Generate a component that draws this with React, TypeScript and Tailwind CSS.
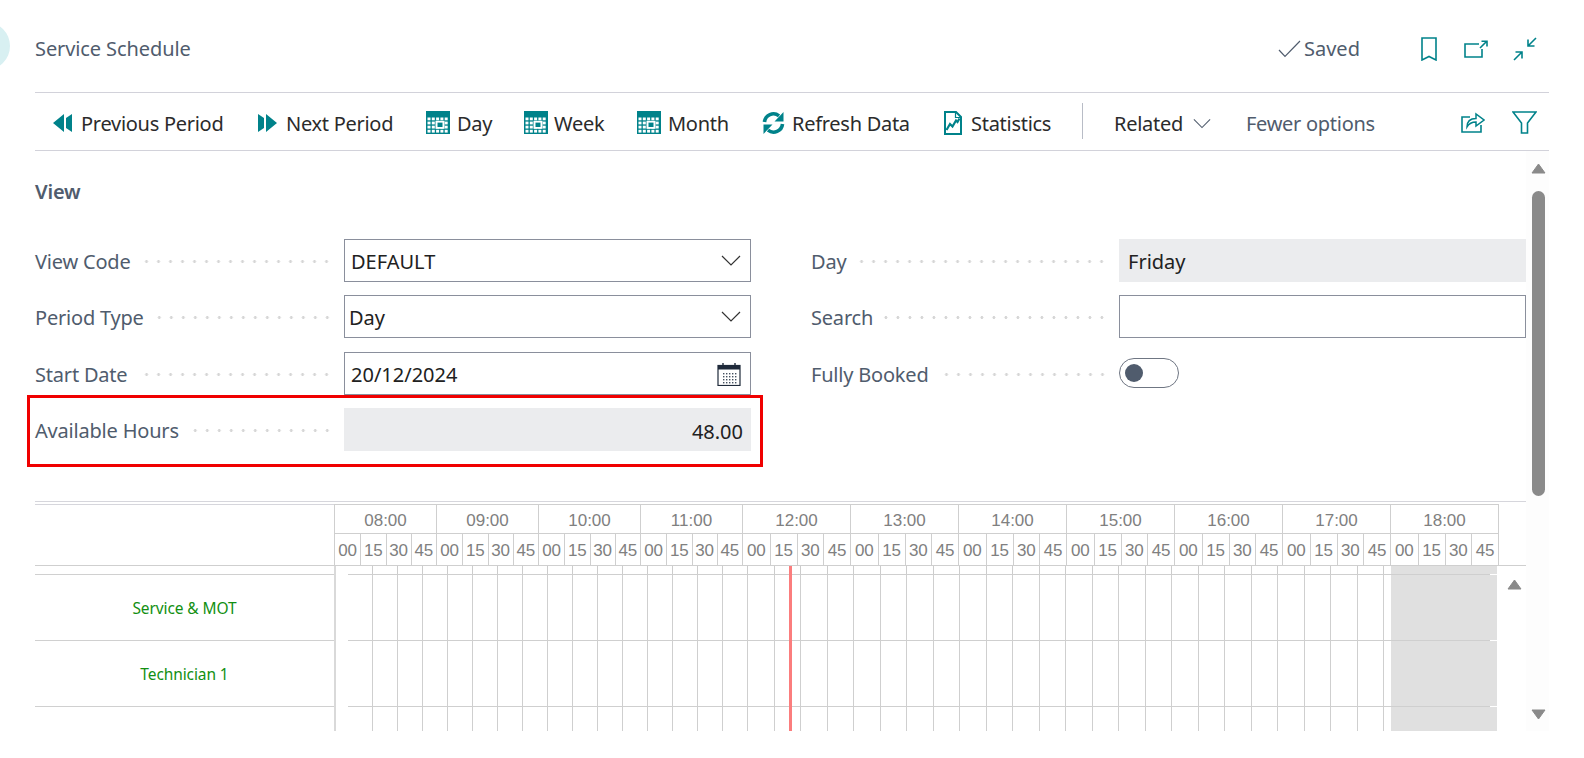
import React from "react";

const TEAL = "#00828a";

function PrevIcon() {
  return (
    <svg width="20" height="18" viewBox="0 0 20 18" className="shrink-0">
      <path d="M0 9 L11 0 V18 Z M13 4 L19 0 V18 L13 14 Z" fill={TEAL} />
    </svg>
  );
}
function NextIcon() {
  return (
    <svg width="20" height="18" viewBox="0 0 20 18" className="shrink-0">
      <path d="M20 9 L9 0 V18 Z M7 4 L1 0 V18 L7 14 Z" fill={TEAL} />
    </svg>
  );
}
function GridIcon() {
  const xs = [1.5, 5.8, 10.1, 14.4, 18.7];
  const ys = [6.5, 10.6, 14.7, 18.8];
  return (
    <svg width="24" height="23" viewBox="0 0 24 23" className="shrink-0">
      <rect width="24" height="23" fill={TEAL} />
      {ys.map((y) =>
        xs.map((x) => <rect key={`${x}-${y}`} x={x} y={y} width="3" height="2.8" fill="#fff" />)
      )}
      <rect x="9.5" y="9.8" width="9" height="8" fill="#fff" />
      <rect x="11.5" y="11.6" width="5" height="4.4" fill={TEAL} />
    </svg>
  );
}
function RefreshIcon() {
  return (
    <svg width="23" height="24" viewBox="0 0 23 24" fill="none" className="shrink-0">
      <path d="M2.5 11 A9 9 0 0 1 17 4.8" stroke={TEAL} strokeWidth="3.6" />
      <path d="M21.5 1 V10.5 H12.5 Z" fill={TEAL} />
      <path d="M20.5 13 A9 9 0 0 1 6 19.2" stroke={TEAL} strokeWidth="3.6" />
      <path d="M1.5 23 V13.5 H10.5 Z" fill={TEAL} />
    </svg>
  );
}
function StatsIcon() {
  return (
    <svg width="18" height="24" viewBox="0 0 18 24" fill="none" className="shrink-0">
      <path d="M1 1 H12 L17 6 V23 H1 Z" stroke={TEAL} strokeWidth="2" />
      <path d="M11.5 1 V6.5 H17" stroke={TEAL} strokeWidth="1.2" />
      <path d="M2.5 19 L6 13 L8.5 15.5 L12 9.5 L13.5 11 L15.5 7.5" stroke={TEAL} strokeWidth="2.2" />
    </svg>
  );
}
function Chevron({ color = "#212121", w = 20 }: { color?: string; w?: number }) {
  return (
    <svg width={w} height="11" viewBox="0 0 20 11" fill="none" className="shrink-0">
      <path d="M1 1 L10 10 L19 1" stroke={color} strokeWidth="1.2" />
    </svg>
  );
}
function CalendarIcon() {
  const xs = [7, 10, 13, 16, 19];
  const ys = [11, 14, 17, 20];
  return (
    <svg width="24" height="24" viewBox="0 0 24 24" fill="none" className="shrink-0">
      <rect x="1" y="3.5" width="22" height="20" stroke="#1f2a3a" strokeWidth="1.2" />
      <rect x="1" y="3.5" width="22" height="4" fill="#1f2a3a" />
      <path d="M6 1 V5 M18 1 V5" stroke="#1f2a3a" strokeWidth="1.4" />
      {ys.map((y) => xs.map((x) => <rect key={`${x}-${y}`} x={x - 1} y={y} width="1.4" height="1.4" fill="#44505f" />))}
    </svg>
  );
}

function ToolButton({ icon, label, cls }: { icon: React.ReactNode; label: string; cls: string }) {
  return (
    <div className={`flex items-center ${cls}`}>
      {icon}
      <span className="whitespace-nowrap pt-[2px]">{label}</span>
    </div>
  );
}

function Dots() {
  return (
    <div className="flex-1 h-[3px] mt-[2px] ml-[10px] mr-[11px] bg-[radial-gradient(circle,#d6d6d6_1.4px,transparent_1.6px)] bg-[length:12px_3px] bg-[position:right_center] bg-repeat-x" />
  );
}

function Row({ label, cls, children }: { label: string; cls?: string; children: React.ReactNode }) {
  return (
    <div className={`flex items-center h-[43px] ${cls ?? ""}`}>
      <span className="text-[20px] tracking-[-0.2px] text-[#505c6d] whitespace-nowrap pt-[3px]">{label}</span>
      <Dots />
      {children}
    </div>
  );
}

const HOURS: { label: string; wide: boolean }[] = [
  { label: "08:00", wide: false },
  { label: "09:00", wide: false },
  { label: "10:00", wide: false },
  { label: "11:00", wide: false },
  { label: "12:00", wide: true },
  { label: "13:00", wide: true },
  { label: "14:00", wide: true },
  { label: "15:00", wide: true },
  { label: "16:00", wide: true },
  { label: "17:00", wide: true },
  { label: "18:00", wide: true },
];
const COL_NARROW = Array.from({ length: 16 });
const COL_WIDE = Array.from({ length: 24 });

function TimelineRow({ h, line }: { h: string; line: boolean }) {
  const t = line ? "border-t border-[#cfcfcf]" : "";
  return (
    <div className={`flex ${h}`}>
      <div className="w-[12px] shrink-0" />
      {COL_NARROW.map((_, i) => (
        <div key={i} className={`w-[25px] shrink-0 border-r border-[#cccccc] ${t}`} />
      ))}
      {COL_WIDE.map((_, i) => (
        <div key={i} className={`w-[26.5px] shrink-0 border-r border-[#cccccc] ${t}`} />
      ))}
      <div className={`w-[6.5px] shrink-0 ${t}`} />
      <div className="w-[106px] shrink-0 bg-[#e0e0e0] flex flex-col">
        {line && (
          <div className="flex h-px shrink-0">
            <div className="w-[99px] bg-[#cfcfcf]" />
            <div className="flex-1 bg-white" />
          </div>
        )}
      </div>
    </div>
  );
}

function Triangle({ down, cls }: { down?: boolean; cls: string }) {
  return (
    <svg width="15" height="11" viewBox="0 0 15 11" className={cls}>
      <path d={down ? "M1 1 H14 L7.5 10 Z" : "M1 10 H14 L7.5 1 Z"} fill="#8a8a8a" stroke="#8a8a8a" strokeLinejoin="round" />
    </svg>
  );
}

export default function App() {
  return (
    <div className="relative w-[1584px] h-[758px] overflow-hidden bg-white font-['Noto_Sans','Open_Sans',sans-serif]">
      <div className="absolute left-[-38px] top-[22px] w-[48px] h-[48px] rounded-full bg-[#d8f0f2]" />

      <div className="ml-[35px] w-[1514px]">
        {/* title bar */}
        <header className="h-[93px] border-b border-[#d2d2da] flex items-center pt-[6px]">
          <h1 className="text-[20px] tracking-[-0.1px] text-[#505c6d] font-normal">Service Schedule</h1>
          <div className="ml-auto flex items-center">
            <svg width="23" height="18" viewBox="0 0 23 18" fill="none" className="mr-[3px]">
              <path d="M1 10 L7 16.5 L22 1" stroke="#505c6d" strokeWidth="1.2" />
            </svg>
            <span className="text-[20px] text-[#505c6d] w-[117px]">Saved</span>
            <svg width="16" height="24" viewBox="0 0 16 24" fill="none" className="mr-[27px]">
              <path d="M1 1 H15 V23 L8 19.5 L1 23 Z" stroke={TEAL} strokeWidth="1.6" />
            </svg>
            <svg width="24" height="18" viewBox="0 0 24 18" fill="none" className="mr-[25px]">
              <path d="M15 4 H1 V17 H18 V9" stroke={TEAL} strokeWidth="1.6" />
              <path d="M16 8 L22 2 M17.5 1.2 H23 V6.5" stroke={TEAL} strokeWidth="1.6" />
            </svg>
            <svg width="24" height="24" viewBox="0 0 24 24" fill="none" className="mr-[12px]">
              <path d="M23 1 L15 9 M15 2.5 V9 H21.5" stroke={TEAL} strokeWidth="1.6" />
              <path d="M1 23 L9 15 M2.5 15 H9 V21.5" stroke={TEAL} strokeWidth="1.6" />
            </svg>
          </div>
        </header>

        {/* action bar */}
        <nav className="h-[58px] border-b border-[#d2d2da] flex items-center text-[20px] tracking-[-0.28px] text-[#2b2b2b] pl-[18px] pt-[2px]">
          <ToolButton icon={<PrevIcon />} label="Previous Period" cls="gap-[8px] w-[204px]" />
          <ToolButton icon={<NextIcon />} label="Next Period" cls="gap-[9px] w-[169px]" />
          <ToolButton icon={<GridIcon />} label="Day" cls="gap-[7px] w-[98px]" />
          <ToolButton icon={<GridIcon />} label="Week" cls="gap-[6px] w-[113px]" />
          <ToolButton icon={<GridIcon />} label="Month" cls="gap-[7px] w-[125px]" />
          <ToolButton icon={<RefreshIcon />} label="Refresh Data" cls="gap-[7px] w-[182px]" />
          <ToolButton icon={<StatsIcon />} label="Statistics" cls="gap-[9px] w-[138px]" />
          <div className="w-px h-[36px] -mt-[3px] bg-[#b8bcc6]" />
          <span className="ml-[31px] pt-[2px]">Related</span>
          <span className="ml-[10px] pt-[2px]"><Chevron color="#505c6d" w={18} /></span>
          <span className="ml-[35px] pt-[2px] text-[#505c6d]">Fewer options</span>
          <svg width="24" height="23" viewBox="0 0 24 23" fill="none" className="ml-[86px] mb-[2px]">
            <path d="M9 7 H1 V22 H20 V15" stroke={TEAL} strokeWidth="1.6" />
            <path d="M6 17 C6 11 10 8.5 15 8.5 V4 L23 10 L15 16 V12 C11 12 8 13.5 6 17 Z" stroke={TEAL} strokeWidth="1.5" />
          </svg>
          <svg width="25" height="23" viewBox="0 0 25 23" fill="none" className="ml-[27px]">
            <path d="M1 1 H24 L15.5 12 V22 H9.5 V12 Z" stroke={TEAL} strokeWidth="1.6" />
          </svg>
        </nav>

        {/* body */}
        <div className="flex h-[581px]">
          <main className="w-[1491px] shrink-0 relative">
            <h2 className="h-[88px] pt-[26px] text-[20px] tracking-[-0.2px] font-semibold text-[#505c6d]">View</h2>

            <div className="flex">
              <section className="w-[716px] shrink-0">
                <Row label="View Code">
                  <div className="w-[407px] h-[43px] border border-[#8a8f9c] flex items-center justify-between pl-[6px] pr-[9px] text-[20px] text-[#212121]">
                    <span className="pt-[2px]">DEFAULT</span>
                    <Chevron color="#333" />
                  </div>
                </Row>
                <Row label="Period Type" cls="mt-[13px]">
                  <div className="w-[407px] h-[43px] border border-[#8a8f9c] flex items-center justify-between pl-[4px] pr-[9px] text-[20px] text-[#212121]">
                    <span className="pt-[2px]">Day</span>
                    <Chevron color="#333" />
                  </div>
                </Row>
                <Row label="Start Date" cls="mt-[14px]">
                  <div className="w-[407px] h-[43px] border border-[#8a8f9c] flex items-center justify-between pl-[6px] pr-[9px] text-[20px] text-[#212121]">
                    <span className="pt-[2px]">20/12/2024</span>
                    <CalendarIcon />
                  </div>
                </Row>
                <Row label="Available Hours" cls="mt-[13px]">
                  <div className="w-[407px] h-[43px] bg-[#ebecee] flex items-center justify-end pr-[8px] pt-[4px] text-[20px] text-[#212121]">
                    48.00
                  </div>
                </Row>
              </section>
              <section className="ml-[60px] w-[715px] shrink-0">
                <Row label="Day">
                  <div className="w-[407px] h-[43px] bg-[#ebecee] flex items-center pl-[9px] pt-[2px] text-[20px] text-[#212121]">Friday</div>
                </Row>
                <Row label="Search" cls="mt-[13px]">
                  <div className="w-[407px] h-[43px] border border-[#8a8f9c]" />
                </Row>
                <Row label="Fully Booked" cls="mt-[14px]">
                  <div className="w-[407px] h-[43px] flex items-center pb-[2px]">
                    <div className="w-[60px] h-[30px] rounded-full border border-[#6f7683] flex items-center pl-[5px]">
                      <div className="w-[18px] h-[18px] rounded-full bg-[#505c6d]" />
                    </div>
                  </div>
                </Row>
              </section>
            </div>

            {/* scheduler */}
            <div className="mt-[50px] border-t border-[#d6d6dc]">
              <div className="mt-[2px] flex border-b border-[#cfcfcf]">
                <div className="w-[299px] shrink-0 border-t border-[#d6d6dc]" />
                <div className="flex border-t border-r border-[#cfcfcf] text-[#808080] text-[17px] font-['Liberation_Sans',Arial,sans-serif]">
                  {HOURS.map((h) => (
                    <div key={h.label} className={`shrink-0 border-l border-[#cfcfcf] ${h.wide ? "w-[108px]" : "w-[102px]"}`}>
                      <div className="h-[29px] flex items-center justify-center pt-[3px] border-b border-[#cfcfcf]">{h.label}</div>
                      <div className="flex h-[31px]">
                        {["00", "15", "30", "45"].map((m, i) => (
                          <div
                            key={m}
                            className={`flex items-center justify-center pt-[3px] ${h.wide ? "w-[27px]" : "w-[25.5px]"} ${i > 0 ? "border-l border-[#cfcfcf]" : ""}`}
                          >
                            {m}
                          </div>
                        ))}
                      </div>
                    </div>
                  ))}
                </div>
              </div>

              <div className="flex h-[165px] overflow-hidden relative">
                <div className="w-[299px] shrink-0 text-[15.5px] tracking-[-0.1px] text-[#128f12] text-center">
                  <div className="h-[8px]" />
                  <div className="h-[66px] border-t border-[#d0d0d0] flex items-center justify-center pt-[2px]">Service &amp; MOT</div>
                  <div className="h-[66px] border-t border-[#d0d0d0] flex items-center justify-center pt-[2px]">Technician 1</div>
                  <div className="h-[25px] border-t border-[#d0d0d0]" />
                </div>
                <div className="border-l-2 border-[#d9d9d9] w-[1180px] shrink-0">
                  <TimelineRow h="h-[8px]" line={false} />
                  <TimelineRow h="h-[66px]" line />
                  <TimelineRow h="h-[66px]" line />
                  <TimelineRow h="h-[25px]" line />
                </div>
                <div className="absolute left-[754px] top-0 bottom-0 w-[3px] bg-[#fb7d7d]" />
                <Triangle cls="absolute left-[1472px] top-[13px]" />
              </div>
            </div>

            {/* highlight */}
            <div className="absolute left-[-8px] top-[244px] w-[736px] h-[72px] border-[3px] border-[#f00000] pointer-events-none" />
          </main>

          {/* page scrollbar */}
          <aside className="w-[23px] shrink-0 bg-[#fdfdfd] flex flex-col items-center pl-[2px] h-[580px]">
            <Triangle cls="mt-[12px]" />
            <div className="mt-[17px] w-[13px] h-[305px] rounded-full bg-[#8a8a8a]" />
            <Triangle down cls="mt-auto mb-[11px]" />
          </aside>
        </div>
      </div>
    </div>
  );
}
